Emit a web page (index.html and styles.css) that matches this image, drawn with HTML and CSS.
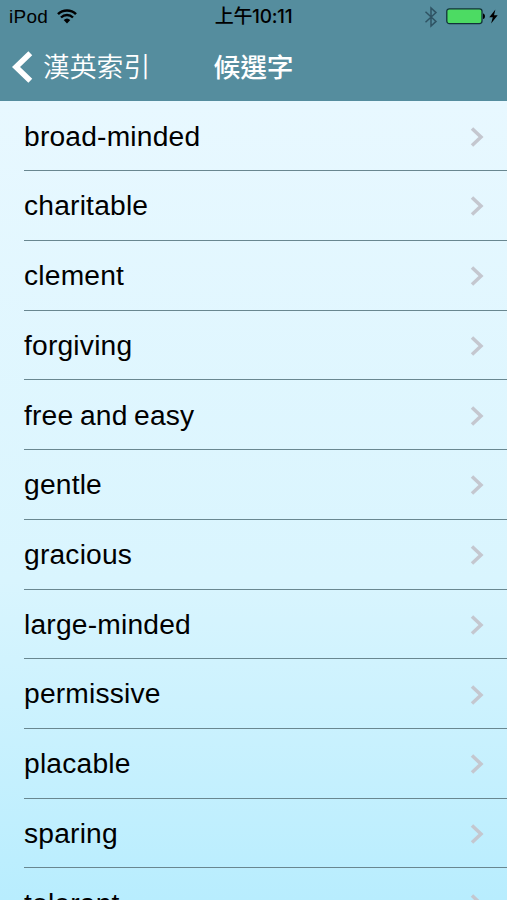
FILE: index.html
```html
<!DOCTYPE html>
<html lang="zh-Hant">
<head>
  <meta charset="UTF-8">
  <meta name="viewport" content="width=device-width, initial-scale=1.0">
  <title>候選字</title>
  <link rel="stylesheet" href="styles.css">
</head>
<body>
  <header>
    <div class="status-bar">
      <div class="carrier">
        <span>iPod</span>
        <svg class="wifi" width="20" height="15" viewBox="0 0 20 15">
          <path d="M1 5.1 A13 13 0 0 1 19 5.1" fill="none" stroke="#000" stroke-width="2.6"/>
          <path d="M4 8.5 A8.6 8.6 0 0 1 16 8.5" fill="none" stroke="#000" stroke-width="2.4"/>
          <path d="M6.7 11.1 A4.8 4.8 0 0 1 13.3 11.1 L10 14.4 Z"/>
        </svg>
      </div>
      <div class="clock">上午10:11</div>
      <div class="indicators">
        <svg class="bluetooth" width="14" height="22" viewBox="0 0 14 22">
          <path d="M1.5 5.8 L12 15.4 L7 20 V2 L12 6.6 L1.5 16.2" fill="none" stroke="#2f5363" stroke-width="1.5"/>
        </svg>
        <svg class="battery" width="40" height="17" viewBox="0 0 40 17">
          <rect x="0.8" y="0.8" width="35.2" height="14.8" rx="2.5" fill="#4cdb63" stroke="#12323a" stroke-width="1.3"/>
          <path d="M37 5.4 C39.6 5.8 39.6 10.7 37 11.1 Z"/>
        </svg>
        <svg class="bolt" width="9" height="15" viewBox="0 0 9 15">
          <path d="M6.4 0.5 L0.3 8.2 H3.8 L2.1 14.5 L8.7 6.3 H5 Z"/>
        </svg>
      </div>
    </div>
    <nav class="nav-bar">
      <a class="back" href="#">
        <svg width="21" height="32" viewBox="0 0 21 32">
          <path d="M18.3 2.2 L4 16 L18.3 29.8" fill="none" stroke="#fff" stroke-width="5.6"/>
        </svg>
        <span>漢英索引</span>
      </a>
      <h1>候選字</h1>
    </nav>
  </header>

  <main>
    <ul class="word-list" id="word-list"></ul>
  </main>

  <script src="script.js"></script>
</body>
</html>
```
FILE: styles.css
```css
* {
  box-sizing: border-box;
}

body {
  margin: 0;
  height: 100vh;
  display: flex;
  flex-direction: column;
  overflow: hidden;
  font-family: "Liberation Sans", "Noto Sans CJK TC", sans-serif;
  color: #000;
  background: #b8edfe;
}

header {
  height: 101.4px;
  flex: none;
  color: #fff;
  background: #558d9e;
}

.status-bar {
  display: grid;
  grid-template-columns: 1fr auto 1fr;
  align-items: center;
  height: 32px;
  padding: 0 9px;
  color: #000;
  font-size: 19px;
  line-height: 32px;
}

.carrier {
  display: flex;
  align-items: center;
  gap: 9px;
  padding-top: 1px;
  letter-spacing: 0.3px;
}

.wifi {
  margin-top: -2px;
}

.clock {
  padding-top: 1px;
  font-size: 19px;
  font-weight: 500;
  font-family: Inter, "Noto Sans CJK TC", sans-serif;
  letter-spacing: -0.3px;
}

.indicators {
  display: flex;
  align-items: center;
  justify-content: flex-end;
}

.battery {
  margin: 0 3px 0 8px;
}

.nav-bar {
  display: grid;
  grid-template-columns: 1fr auto 1fr;
  align-items: center;
  height: 69px;
  padding: 0 12px;
}

.back {
  display: flex;
  align-items: center;
  gap: 10px;
  color: #fff;
  font-family: "Noto Sans CJK TC", sans-serif;
  font-size: 26.8px;
  font-weight: 350;
  line-height: 36px;
  text-decoration: none;
}

.back span,
h1 {
  padding-bottom: 2px;
}

h1 {
  margin: 0;
  font-family: "Noto Sans CJK TC", sans-serif;
  font-size: 26.7px;
  font-weight: 500;
  line-height: 36px;
}

main {
  flex: 1;
  min-height: 0;
  overflow: hidden;
  background: linear-gradient(#e8f8ff, #d9f5fe 60%, #b8edfe);
}

.word-list {
  margin: 0;
  padding: 0 0 0 24px;
  list-style: none;
}

.word-list li {
  display: flex;
  align-items: center;
  justify-content: space-between;
  height: 69.74px;
  padding: 2px 23px 0 0;
  border-bottom: 1px solid #698790;
  font-size: 28.2px;
  line-height: 36px;
  letter-spacing: 0.2px;
  word-spacing: -1.5px;
}

.word-list span {
  padding-bottom: 2.4px;
}
```
FILE: script.js
```js
const words = [
  'broad-minded', 'charitable', 'clement', 'forgiving',
  'free and easy', 'gentle', 'gracious', 'large-minded',
  'permissive', 'placable', 'sparing', 'tolerant'
];

const arrow = `<svg width="14" height="20" viewBox="0 0 14 20">
  <path d="M2 1.5 L11 10 L2 18.5" fill="none" stroke="#c4c7cf" stroke-width="3.5"/>
</svg>`;

document.getElementById('word-list').innerHTML = words
  .map(word => `<li><span>${word}</span>${arrow}</li>`)
  .join('');
```
